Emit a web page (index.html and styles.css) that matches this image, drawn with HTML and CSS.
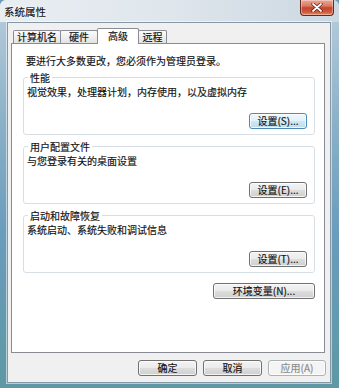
FILE: index.html
```html
<!DOCTYPE html>
<html lang="zh-CN">
<head>
<meta charset="utf-8">
<title>系统属性</title>
<link rel="stylesheet" href="styles.css">
</head>
<body>
<div class="window">
  <div class="titlebar">
    <span class="title">系统属性</span>
    <button class="close" aria-label="关闭">
      <svg width="12" height="9" viewBox="0 0 12 9">
        <path d="M2 1 L10 8 M10 1 L2 8" stroke="#5a1a10" stroke-width="3.2" stroke-linecap="round"/>
        <path d="M2 1 L10 8 M10 1 L2 8" stroke="#ffffff" stroke-width="1.8" stroke-linecap="round"/>
      </svg>
    </button>
  </div>
  <div class="client">
    <div class="tabs">
      <div class="tab tab-name">计算机名</div>
      <div class="tab tab-hw">硬件</div>
      <div class="tab tab-adv active">高级</div>
      <div class="tab tab-remote">远程</div>
    </div>
    <div class="panel">
      <p class="intro">要进行大多数更改，您必须作为管理员登录。</p>
      <fieldset class="group">
        <legend>性能</legend>
        <p class="desc">视觉效果，处理器计划，内存使用，以及虚拟内存</p>
        <div class="row"><button class="btn hot">设置(S)...</button></div>
      </fieldset>
      <fieldset class="group">
        <legend>用户配置文件</legend>
        <p class="desc">与您登录有关的桌面设置</p>
        <div class="row"><button class="btn">设置(E)...</button></div>
      </fieldset>
      <fieldset class="group">
        <legend>启动和故障恢复</legend>
        <p class="desc">系统启动、系统失败和调试信息</p>
        <div class="row"><button class="btn">设置(T)...</button></div>
      </fieldset>
      <div class="row env"><button class="btn wide">环境变量(N)...</button></div>
    </div>
    <div class="footer">
      <button class="btn">确定</button>
      <button class="btn">取消</button>
      <button class="btn disabled">应用(A)</button>
    </div>
  </div>
</div>
</body>
</html>
```
FILE: styles.css
```css
* { box-sizing: border-box; }
html, body { margin: 0; padding: 0; }
body {
  width: 339px;
  height: 388px;
  overflow: hidden;
  background: #6f9bb4;
  font-family: "Noto Sans CJK SC", "Noto Sans", sans-serif;
  font-size: 10px;
  color: #111;
  -webkit-text-stroke: 0.15px currentColor;
}
.window {
  width: 339px;
  height: 388px;
  display: flex;
  flex-direction: column;
  background: linear-gradient(to bottom, #b9cddc 0, #8db2c8 30%, #6a9cbc 60%, #5f98a4 100%);
  border-radius: 6px 6px 0 0;
  overflow: hidden;
}
.titlebar {
  height: 22px;
  display: flex;
  align-items: flex-start;
  padding: 0 5px 0 4px;
  background: linear-gradient(to right, #e9eef2 0, #dfe6ec 50%, #cbd8e2 100%);
}
.title {
  font-size: 10.5px;
  line-height: 23px;
  color: #111;
  text-shadow: 0 0 4px #fff, 0 0 2px #fff;
}
.close {
  margin-left: auto;
  width: 34px;
  height: 16px;
  padding: 0;
  border: 1px solid #5e2a22;
  border-top: none;
  border-radius: 0 0 4px 4px;
  background: linear-gradient(to bottom, #e9a897 0, #d97a63 40%, #c4442a 52%, #cf5a3a 80%, #e08a6a 100%);
  display: flex;
  align-items: center;
  justify-content: center;
  box-shadow: inset 0 0 0 1px rgba(255,255,255,0.35);
}
.client {
  flex: 1;
  margin: 0 8px 5px 7px;
  background: #f0f0f0;
  border: 1px solid #8697a6;
  box-shadow: 0 0 0 1px rgba(255,255,255,0.55);
  padding: 5px 5px 0 3px;
  display: flex;
  flex-direction: column;
}
.tabs {
  display: flex;
  align-items: flex-end;
  height: 15px;
  padding-left: 2px;
}
.tab {
  height: 13px;
  border: 1px solid #898c95;
  border-bottom: none;
  border-radius: 2px 2px 0 0;
  background: linear-gradient(to bottom, #fbfbfb 0, #efefef 50%, #e3e3e3 100%);
  text-align: center;
  line-height: 12px;
  white-space: nowrap;
}
.tab + .tab { margin-left: -1px; }
.tab-name { width: 48px; }
.tab-hw { width: 38px; }
.tab-adv { width: 42px; }
.tab-remote { width: 29px; }
.tab.active {
  position: relative;
  z-index: 1;
  height: 16px;
  margin-bottom: -1px;
  background: #fff;
  line-height: 13px;
}
.panel {
  height: 310px;
  background: #fff;
  border: 1px solid #898c95;
  padding: 0 9px 0 11px;
  display: flex;
  flex-direction: column;
}
.intro {
  margin: 10px 0 0 3px;
  line-height: 13px;
}
.group {
  margin: 5px 0 0;
  padding: 0 7px 5px 3px;
  border: 1px solid #d5dfe5;
  border-radius: 3px;
  min-width: 0;
}
.group:first-of-type { margin-top: 4px; }
.group legend {
  padding: 0 2px;
  margin-left: 1px;
  line-height: 13px;
}
.desc {
  margin: 1px 0 0;
  line-height: 13px;
}
.row {
  display: flex;
  justify-content: flex-end;
  margin-top: 15px;
}
.row.env { margin-top: 10px; }
.btn {
  width: 58px;
  height: 16px;
  padding: 0;
  font-family: inherit;
  font-size: 10px;
  line-height: 14px;
  color: #111;
  border: 1px solid #707070;
  border-radius: 3px;
  background: linear-gradient(to bottom, #f3f3f3 0, #ebebeb 48%, #dddddd 52%, #cfcfcf 100%);
  box-shadow: inset 0 0 0 1px rgba(255,255,255,0.75);
  white-space: nowrap;
}
.btn.hot {
  border-color: #4d8ab8;
  background: linear-gradient(to bottom, #eef7fd 0, #e2f1fb 48%, #cfe7f6 52%, #bcdcee 100%);
}
.btn.wide { width: 102px; }
.btn.disabled {
  color: #8a8a8a;
  border-color: #adb2b5;
  background: #f4f4f4;
}
.footer {
  display: flex;
  justify-content: flex-end;
  gap: 6px;
  padding-top: 7px;
  margin-right: -1px;
}
.footer .btn { width: 59px; }
.footer .btn.disabled { width: 58px; }
```
